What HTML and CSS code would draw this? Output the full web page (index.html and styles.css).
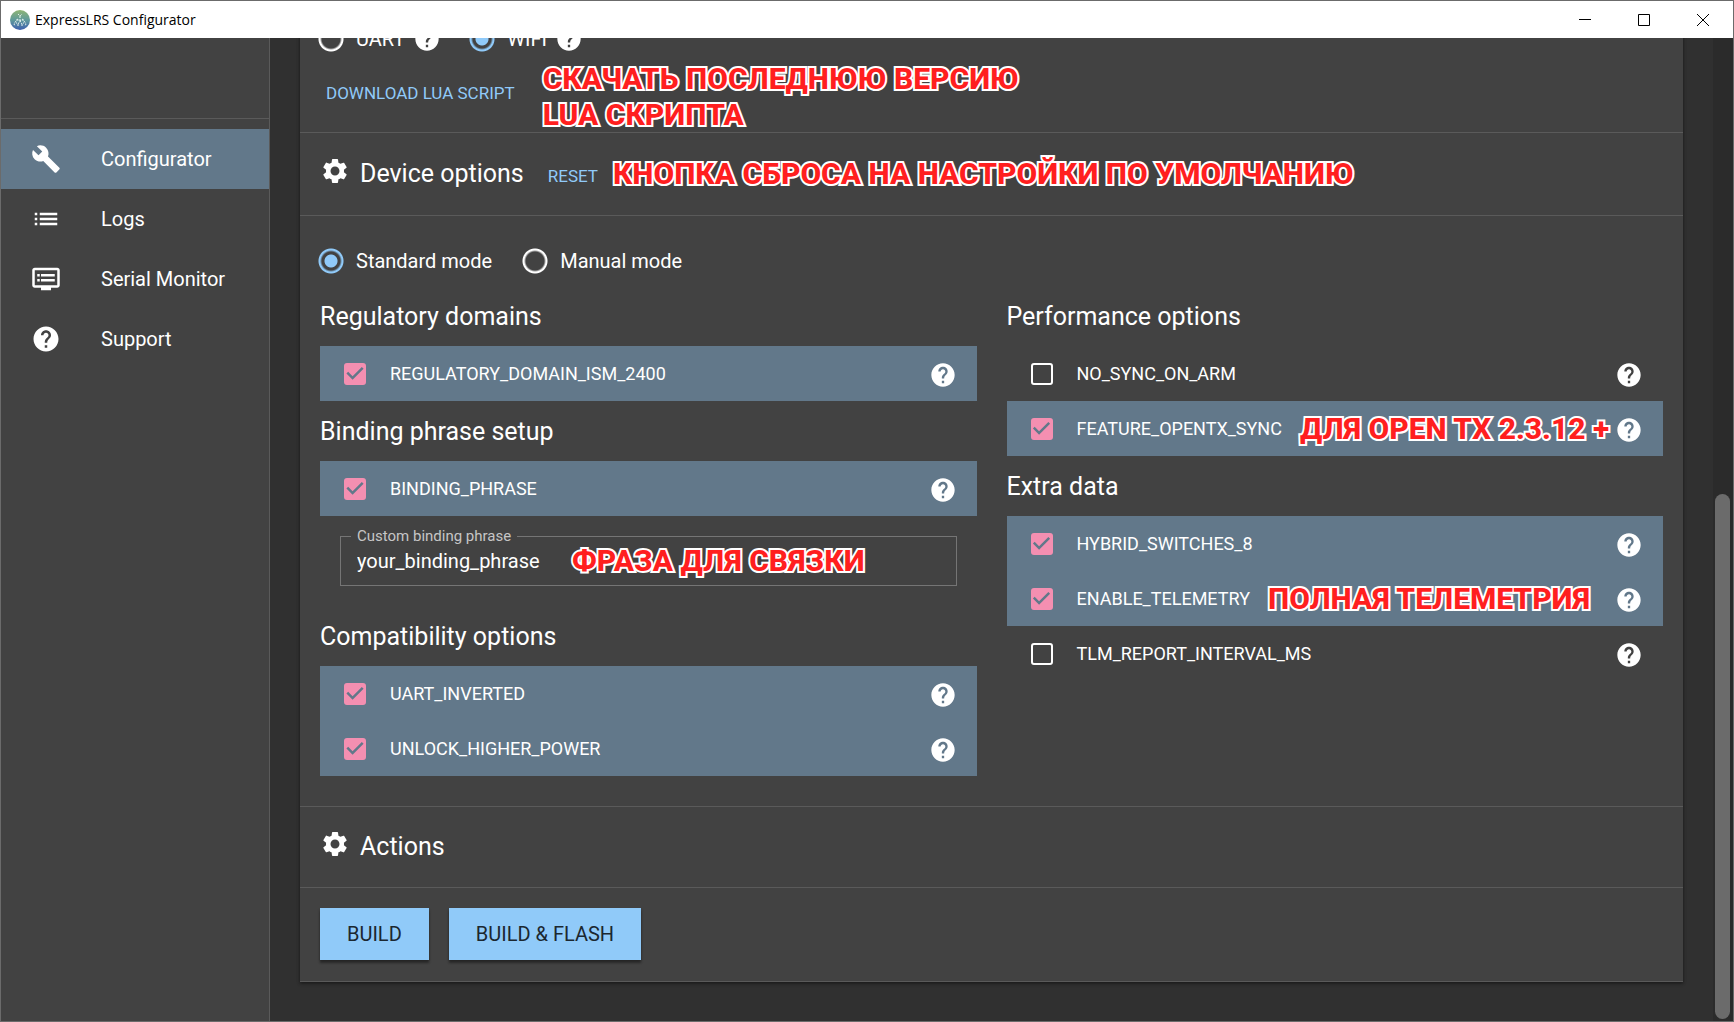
FILE: index.html
```html
<!DOCTYPE html>
<html lang="en">
<head>
<meta charset="utf-8">
<title>ExpressLRS Configurator</title>
<link rel="stylesheet" href="styles.css">
</head>
<body>
<svg class="sprite" aria-hidden="true">
  <symbol id="help" viewBox="0 0 24 24"><path d="M12 2C6.48 2 2 6.48 2 12s4.48 10 10 10 10-4.480 10-10S17.520 2 12 2zm1 17h-2v-2h2v2zm2.070-7.750l-.9.920C13.450 12.900 13 13.500 13 15h-2v-.5c0-1.100.45-2.100 1.170-2.830l1.240-1.260c.37-.36.59-.86.59-1.410 0-1.100-.9-2-2-2s-2 .9-2 2H8c0-2.210 1.790-4 4-4s4 1.790 4 4c0 .88-.36 1.680-.93 2.250z"/></symbol>
  <symbol id="gear" viewBox="0 0 24 24"><path d="M19.140 12.940c.04-.3.060-.61.060-.94 0-.32-.02-.64-.07-.94l2.030-1.580c.18-.14.23-.41.120-.61l-1.920-3.320c-.12-.22-.37-.29-.59-.22l-2.390.96c-.5-.38-1.030-.7-1.620-.94l-.36-2.540c-.04-.24-.24-.41-.48-.41h-3.840c-.24 0-.43.17-.47.410l-.36 2.540c-.59.24-1.130.57-1.620.94l-2.390-.96c-.22-.08-.47 0-.59.22L2.740 8.870c-.12.210-.08.470.12.610l2.030 1.580c-.05.300-.09.630-.09.940s.02.640.07.940l-2.030 1.580c-.18.140-.23.410-.12.610l1.920 3.320c.12.220.37.290.59.220l2.390-.96c.5.380 1.030.700 1.620.940l.36 2.540c.05.240.24.410.48.410h3.840c.24 0 .44-.17.470-.41l.36-2.540c.59-.24 1.130-.56 1.620-.94l2.390.96c.22.080.47 0 .59-.22l1.920-3.320c.12-.22.070-.47-.12-.61l-2.010-1.580zM12 15.600c-1.980 0-3.600-1.620-3.600-3.600s1.620-3.600 3.600-3.600 3.600 1.620 3.600 3.600-1.620 3.600-3.600 3.600z"/></symbol>
</svg>
<div class="window">
  <header class="titlebar">
    <svg class="logo" viewBox="0 0 20 20" aria-hidden="true">
      <defs><linearGradient id="sky" x1="0" y1="0" x2="0" y2="1"><stop offset="0" stop-color="#8fb573"/><stop offset=".5" stop-color="#5f9a9c"/><stop offset="1" stop-color="#3c5fae"/></linearGradient></defs>
      <circle cx="10" cy="10" r="10" fill="url(#sky)"/>
      <path d="M8 4l2 2 2-2M10 6v5M7 9l3 2 3-2M7 9v2M13 9v2M8 14l2-3 2 3M6 11l-2 3 1 2M14 11l2 3-1 2M8 14v2M12 14v2M6 13h1M13 13h1" fill="none" stroke="#e6f1ee" stroke-width="1" stroke-dasharray="2 1"/>
    </svg>
    <span class="app-name">ExpressLRS Configurator</span>
    <div class="window-controls">
      <button type="button" aria-label="Minimize"><svg viewBox="0 0 12 12"><path d="M0 5.500h12"/></svg></button>
      <button type="button" aria-label="Maximize"><svg viewBox="0 0 12 12"><path d="M.5.500h11v11h-11z"/></svg></button>
      <button type="button" aria-label="Close"><svg viewBox="0 0 12 12"><path d="M0 0l12 12M12 0L0 12"/></svg></button>
    </div>
  </header>
  <div class="body">
    <nav class="sidebar">
      <div class="sidebar-head"></div>
      <a class="nav-item active" href="#configurator"><svg class="icon" viewBox="0 0 24 24"><path d="M22.700 19l-9.100-9.100c.9-2.300.4-5-1.500-6.900-2-2-5-2.400-7.400-1.300L9 6 6 9 1.600 4.700C.4 7.100.9 10.100 2.900 12.100c1.900 1.900 4.600 2.400 6.900 1.500l9.100 9.100c.4.400 1 .4 1.400 0l2.300-2.300c.5-.4.5-1.100.1-1.400z"/></svg>Configurator</a>
      <a class="nav-item" href="#logs"><svg class="icon" viewBox="0 0 24 24"><path d="M3 13h2v-2H3v2zm0 4h2v-2H3v2zm0-8h2V7H3v2zm4 4h14v-2H7v2zm0 4h14v-2H7v2zM7 7v2h14V7H7z"/></svg>Logs</a>
      <a class="nav-item" href="#serial"><svg class="icon" viewBox="0 0 24 24"><path d="M21 3H3c-1.100 0-2 .9-2 2v12c0 1.100.9 2 2 2h5v2h8v-2h5c1.100 0 1.990-.9 1.990-2L23 5c0-1.100-.9-2-2-2zm0 14H3V5h18v12zm-2-9H8v2h11V8zm0 4H8v2h11v-2zM7 8H5v2h2V8zm0 4H5v2h2v-2z"/></svg>Serial Monitor</a>
      <a class="nav-item" href="#support"><svg class="icon"><use href="#help"/></svg>Support</a>
    </nav>
    <main class="main">
      <div class="card">
        <div class="radios methods">
          <label><input type="radio" name="method">UART</label>
          <button class="help" type="button" aria-label="About UART"><svg><use href="#help"/></svg></button>
          <label class="second"><input type="radio" name="method" checked>WIFI</label>
          <button class="help" type="button" aria-label="About WIFI"><svg><use href="#help"/></svg></button>
        </div>
        <div class="download">
          <button class="text-button" type="button">DOWNLOAD LUA SCRIPT</button>
          <p class="note">СКАЧАТЬ ПОСЛЕДНЮЮ ВЕРСИЮ<br>LUA СКРИПТА</p>
        </div>
        <div class="section-head">
          <svg class="icon"><use href="#gear"/></svg>
          <h2>Device options</h2>
          <button class="text-button reset" type="button">RESET</button>
          <p class="note">КНОПКА СБРОСА НА НАСТРОЙКИ ПО УМОЛЧАНИЮ</p>
        </div>
        <div class="options">
          <div class="radios">
            <label><input type="radio" name="mode" checked>Standard mode</label>
            <label class="manual"><input type="radio" name="mode">Manual mode</label>
          </div>
          <div class="columns">
            <div>
              <h3>Regulatory domains</h3>
              <div class="flag on"><label><input type="checkbox" checked>REGULATORY_DOMAIN_ISM_2400</label><button class="help" type="button" aria-label="Help"><svg><use href="#help"/></svg></button></div>
              <h3>Binding phrase setup</h3>
              <div class="flag on"><label><input type="checkbox" checked>BINDING_PHRASE</label><button class="help" type="button" aria-label="Help"><svg><use href="#help"/></svg></button></div>
              <div class="field">
                <label for="phrase">Custom binding phrase</label>
                <input id="phrase" type="text" value="your_binding_phrase">
                <p class="note">ФРАЗА ДЛЯ СВЯЗКИ</p>
              </div>
              <h3>Compatibility options</h3>
              <div class="flag on"><label><input type="checkbox" checked>UART_INVERTED</label><button class="help" type="button" aria-label="Help"><svg><use href="#help"/></svg></button></div>
              <div class="flag on"><label><input type="checkbox" checked>UNLOCK_HIGHER_POWER</label><button class="help" type="button" aria-label="Help"><svg><use href="#help"/></svg></button></div>
            </div>
            <div>
              <h3>Performance options</h3>
              <div class="flag"><label><input type="checkbox">NO_SYNC_ON_ARM</label><button class="help" type="button" aria-label="Help"><svg><use href="#help"/></svg></button></div>
              <div class="flag on"><label><input type="checkbox" checked>FEATURE_OPENTX_SYNC</label><p class="note">ДЛЯ OPEN TX 2.3.12 +</p><button class="help" type="button" aria-label="Help"><svg><use href="#help"/></svg></button></div>
              <h3>Extra data</h3>
              <div class="flag on"><label><input type="checkbox" checked>HYBRID_SWITCHES_8</label><button class="help" type="button" aria-label="Help"><svg><use href="#help"/></svg></button></div>
              <div class="flag on"><label><input type="checkbox" checked>ENABLE_TELEMETRY</label><p class="note">ПОЛНАЯ ТЕЛЕМЕТРИЯ</p><button class="help" type="button" aria-label="Help"><svg><use href="#help"/></svg></button></div>
              <div class="flag"><label><input type="checkbox">TLM_REPORT_INTERVAL_MS</label><button class="help" type="button" aria-label="Help"><svg><use href="#help"/></svg></button></div>
            </div>
          </div>
        </div>
        <div class="section-head">
          <svg class="icon"><use href="#gear"/></svg>
          <h2>Actions</h2>
        </div>
        <div class="actions">
          <button type="button">BUILD</button>
          <button type="button">BUILD &amp; FLASH</button>
        </div>
      </div>
    </main>
    <div class="scrollbar"><div class="thumb"></div></div>
  </div>
</div>
</body>
</html>
```

FILE: styles.css
```css
* { box-sizing: border-box; }
body {
  margin: 0;
  background: #303030;
  color: #fff;
  font: 20px/30px Roboto, sans-serif;
}
h2, h3, p { margin: 0; font-weight: 400; }
button { font-family: inherit; border: 0; padding: 0; background: none; cursor: pointer; }
.sprite { display: none; }
.icon { flex: none; width: 30px; height: 30px; fill: currentColor; }

.window {
  display: flex;
  flex-direction: column;
  height: 100vh;
  border: 1px solid #6b6b6b;
}

/* Title bar */
.titlebar {
  flex: none;
  display: flex;
  align-items: center;
  height: 37px;
  padding: 0 1px 0 9px;
  background: #fff;
  color: #000;
}
.logo { width: 20px; height: 20px; margin-right: 5px; }
.app-name { font: 14px/20px "Open Sans", sans-serif; }
.window-controls { display: flex; align-self: stretch; margin-left: auto; }
.window-controls button { display: grid; place-items: center; width: 59px; }
.window-controls svg { width: 12px; height: 12px; fill: none; stroke: #000; stroke-width: 1; }

.body { flex: 1; display: flex; min-height: 0; }

/* Sidebar */
.sidebar {
  flex: none;
  width: 269px;
  background: #424242;
  border-right: 1px solid #5a5a5a;
}
.sidebar-head { height: 81px; margin-bottom: 10px; border-bottom: 1px solid #5a5a5a; }
.nav-item {
  display: flex;
  align-items: center;
  gap: 40px;
  height: 60px;
  padding-left: 30px;
  color: #fff;
  text-decoration: none;
}
.nav-item.active { background: #62788a; }

/* Main card */
.main { flex: 1; overflow: hidden; padding: 0 30px; }
.card {
  margin-top: -16px;
  background: #424242;
  border-bottom: 1px solid #5a5a5a;
  box-shadow: 0 1px 3px #0006, 0 2px 4px #0003;
}
.radios { display: flex; align-items: center; height: 34px; padding-left: 18px; }
.radios label { display: flex; align-items: center; gap: 12px; }
.radios .manual { margin-left: 30px; }
.methods .help { margin-left: 8px; }
.methods .second { margin-left: 28px; }

input[type="radio"] {
  appearance: none;
  flex: none;
  width: 26px;
  height: 26px;
  margin: 0;
  background: radial-gradient(circle, transparent 9px, #fff 11px, #fff 12px, transparent 13px);
}
input[type="radio"]:checked {
  background: radial-gradient(circle, #90caf9 6px, transparent 7px, transparent 9px, #90caf9 11px, #90caf9 12px, transparent 13px);
}
.help { flex: none; display: block; width: 28px; height: 28px; color: #fff; }
.help svg { display: block; width: 28px; height: 28px; fill: currentColor; }

.download { display: flex; height: 76px; padding-left: 26px; gap: 28px; }
.text-button { color: #90caf9; font-size: 17px; line-height: 30px; white-space: nowrap; }
.download .text-button { align-self: flex-start; margin-top: 22px; }
.download .note { margin-top: 5px; }

.note {
  color: #ff1f1f;
  font-size: 30px;
  line-height: 36px;
  font-weight: 800;
  white-space: nowrap;
  -webkit-text-stroke: 4px #fff;
  paint-order: stroke fill;
}

.section-head {
  display: flex;
  align-items: center;
  padding: 20px;
  min-height: 82px;
  border-top: 1px solid #5a5a5a;
  border-bottom: 1px solid #5a5a5a;
}
.download + .section-head { min-height: 84px; }
.section-head .icon { margin: 0 10px 6px 0; }
h2, h3 { font-size: 25px; line-height: 30px; white-space: nowrap; }
.section-head .reset { margin: 4px 15px 0 24px; }

.options { padding: 28px 20px 30px; }
.options .radios { padding-left: 0; margin-left: -2px; }
.columns { display: grid; grid-template-columns: 1fr 1fr; gap: 30px; margin-top: 8px; }
h3 { padding: 16px 0 14px; }

.flag { display: flex; align-items: center; height: 55px; padding: 0 20px 0 24px; }
.flag.on { background: #62788a; }
.flag label { display: flex; align-items: center; gap: 24px; font-size: 18px; }
.flag .help { margin: 2px 0 0 auto; }
.flag .note { margin-left: 18px; }
input[type="checkbox"] {
  appearance: none;
  flex: none;
  width: 22px;
  height: 22px;
  margin: 0;
  border: 2px solid #fff;
  border-radius: 3px;
}
input[type="checkbox"]:checked { border: 0; background: #f48fb1; }
input[type="checkbox"]:checked::after {
  content: "";
  display: block;
  height: 22px;
  background: #62788a;
  clip-path: polygon(39% 78%, 11% 50%, 19% 42%, 39% 62%, 81% 20%, 89% 28%);
}

.field { position: relative; margin: 20px; }
.field label {
  position: absolute;
  top: -10px;
  left: 11px;
  padding: 0 6px;
  background: #424242;
  color: #c6c6c6;
  font-size: 15px;
  line-height: 20px;
}
.field input {
  display: block;
  width: 100%;
  height: 50px;
  padding: 0 16px;
  border: 1px solid #757575;
  background: none;
  color: #fff;
  font: inherit;
}
.field .note { position: absolute; top: 7px; left: 232px; }

.actions { display: flex; gap: 20px; padding: 20px 20px 21px; }
.actions button {
  height: 52px;
  padding: 0 27px;
  background: #90caf9;
  color: #1b2730;
  font-size: 20px;
  box-shadow: 0 3px 2px #0004, 0 2px 3px #0004;
}

/* Scrollbar */
.scrollbar { flex: none; display: flex; align-items: flex-end; width: 20px; padding: 2px 3px 2px 2px; background: #2b2b2b; }
.thumb { width: 15px; height: calc(54% - 4px); border-radius: 8px; background: #6b6b6b; }
```
